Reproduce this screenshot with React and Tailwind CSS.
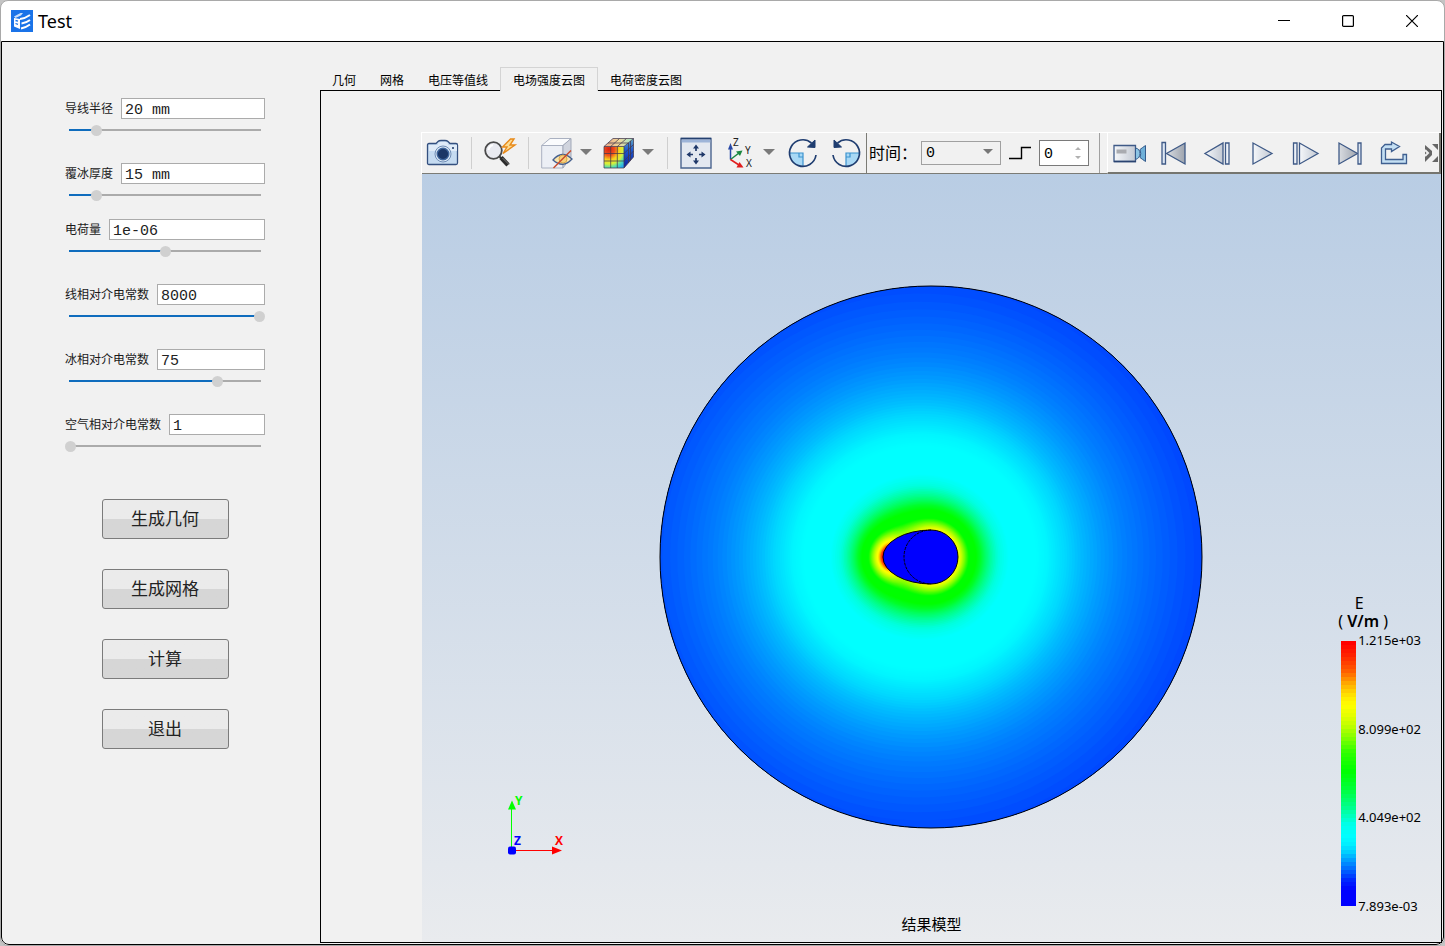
import React, { useState } from "react";

const STOPS = [
  [0, [0, 0, 255]],
  [0.05, [0, 0, 255]],
  [0.09, [0, 36, 255]],
  [0.12, [0, 84, 255]],
  [0.165, [0, 152, 255]],
  [0.2, [0, 208, 255]],
  [0.235, [0, 244, 255]],
  [0.265, [0, 255, 255]],
  [0.31, [0, 255, 230]],
  [0.37, [0, 255, 144]],
  [0.44, [0, 255, 60]],
  [0.51, [0, 255, 0]],
  [0.58, [48, 255, 0]],
  [0.63, [122, 255, 0]],
  [0.68, [190, 255, 0]],
  [0.72, [228, 255, 0]],
  [0.76, [255, 255, 0]],
  [0.79, [255, 236, 0]],
  [0.84, [255, 176, 0]],
  [0.89, [255, 96, 0]],
  [0.95, [255, 36, 0]],
  [1, [255, 0, 0]],
];

const PLOT_STOPS = [
  [0, [0, 64, 255]],
  [0.088, [0, 70, 255]],
  [0.105, [0, 100, 255]],
  [0.125, [0, 132, 255]],
  [0.15, [0, 176, 255]],
  [0.175, [0, 218, 255]],
  [0.2, [0, 246, 255]],
  [0.22, [0, 255, 255]],
  [0.29, [0, 255, 255]],
  [0.33, [0, 255, 222]],
  [0.38, [0, 255, 140]],
  [0.44, [0, 255, 40]],
  [0.48, [0, 255, 0]],
  [0.56, [0, 255, 0]],
  ...STOPS.slice(13),
];

function colorAt(t, stops = STOPS) {
  for (let i = 1; i < stops.length; i++) {
    if (t <= stops[i][0]) {
      const [a, ca] = stops[i - 1];
      const [b, cb] = stops[i];
      const k = (t - a) / (b - a);
      const c = ca.map((v, j) => Math.round(v + (cb[j] - v) * k));
      return `rgb(${c.join(",")})`;
    }
  }
  return "rgb(255,0,0)";
}

// Field strength (share of the maximum) of two line charges inside the iced wire.
const CHARGES = [
  [272, 272, 21276],
  [236, 272, 9260],
];
function field(x, y) {
  let ex = 0;
  let ey = 0;
  for (const [cx, cy, q] of CHARGES) {
    const dx = x - cx;
    const dy = y - cy;
    const d = dx * dx + dy * dy;
    ex += (q * dx) / d;
    ey += (q * dy) / d;
  }
  return Math.hypot(ex, ey) / 1215;
}

function contour(level) {
  const pts = [];
  for (let i = 0; i < 96; i++) {
    const a = (i / 96) * Math.PI * 2;
    let lo = 22;
    let hi = 420;
    for (let n = 0; n < 18; n++) {
      const m = (lo + hi) / 2;
      if (field(256 + m * Math.cos(a), 272 + m * Math.sin(a)) > level) lo = m;
      else hi = m;
    }
    pts.push(`${(256 + lo * Math.cos(a)).toFixed(1)} ${(272 + lo * Math.sin(a)).toFixed(1)}`);
  }
  return `M${pts.join("L")}Z`;
}

const BANDS = [];
for (let t = 0.08; t < 1; t += t < 0.3 ? 0.003 : 0.008) BANDS.push({ d: contour(t), fill: colorAt(t, PLOT_STOPS) });

function FieldPlot() {
  return (
    <svg viewBox="0 0 544 544" className="w-[544px] h-[544px]" role="img" aria-label="电场强度云图">
      <clipPath id="air"><circle cx="272" cy="272" r="271" /></clipPath>
      <g clipPath="url(#air)">
        <rect width="544" height="544" fill={colorAt(0.08, PLOT_STOPS)} />
        {BANDS.map((b, i) => <path key={i} d={b.d} fill={b.fill} />)}
      </g>
      <circle cx="272" cy="272" r="271" fill="none" stroke="#000" />
      <path d="M272 245A27 27 0 0 1 272 299A48 27 0 0 1 272 245Z" fill="#00f" stroke="#000" />
      <path d="M272 245A27 27 0 0 0 272 299" fill="none" stroke="#000" strokeDasharray="3 1" />
    </svg>
  );
}

function Icon({ children, size = "w-8 h-8" }) {
  return <svg viewBox="0 0 32 32" className={`${size} shrink-0 overflow-visible`} fill="none" aria-hidden="true">{children}</svg>;
}

const CameraIcon = () => (
  <Icon>
    <path d="M2 6.500H9L11 4.500Q12 3.500 14 3.500H18Q20 3.500 21 4.500L23 6.500H29Q30.500 6.500 30.500 8V26Q30.500 27.500 29 27.500H2Q.5 27.500 .5 26V8Q.5 6.500 2 6.500Z" fill="#c5dbf1" stroke="#34507f" strokeWidth="1.300" />
    <path d="M2 8H30V14H2Z" fill="#dfebf8" />
    <path d="M11 6.500L13 5H19L21 6.500V9H11Z" fill="#dfebf8" />
    <circle cx="16" cy="17" r="8" fill="#dce9f7" stroke="#6f8db5" />
    <circle cx="16" cy="17" r="5.800" fill="#1b3766" stroke="#3f669c" strokeWidth="1.400" />
    <circle cx="26" cy="11" r="1" fill="#1b3766" />
  </Icon>
);
const SearchIcon = () => (
  <Icon>
    <path d="M15 19L18 22" stroke="#333" strokeWidth="2" />
    <path d="M17 20.500L24 28" stroke="#2c2c2c" strokeWidth="4.500" />
    <path d="M18.500 21L25 27.500" stroke="#777" />
    <circle cx="9.500" cy="13.500" r="8.300" fill="#e9eaf0" stroke="#4a4a4a" strokeWidth="1.800" />
    <path d="M4.500 13Q5 9 9 8" stroke="#fff" strokeWidth="2" />
    <path d="M26.500 2L18.500 10H23L19 16.500L31 8H26L30 2Z" fill="#fddc92" stroke="#e88a1a" strokeWidth="1.400" />
  </Icon>
);
const HiddenCubeIcon = () => (
  <Icon>
    <path d="M.7 8.500H22V31H.7Z" fill="#eceff5" stroke="#aab1c1" />
    <path d="M.7 8.500L9 1.500H30L22 8.500Z" fill="#fafbfd" stroke="#aab1c1" />
    <path d="M22 8.500L30 1.500V20L22 31Z" fill="#d0d4de" stroke="#a2a9b9" />
    <path d="M12 23Q21 12.500 31 22Q22 32 12 23Z" fill="#fbe4ab" stroke="#46608f" strokeWidth="1.300" />
    <circle cx="22" cy="22" r="4" fill="#f7d07a" stroke="#d9a64d" />
    <path d="M12.500 31L30 13.500" stroke="#c94a2a" strokeWidth="1.500" />
  </Icon>
);
const ColorCubeIcon = () => (
  <Icon>
    <defs>
      <radialGradient id="cf" cx=".25" cy=".12" r="1.050">
        <stop offset="0" stopColor="#d81f12" /><stop offset=".28" stopColor="#f0521c" /><stop offset=".48" stopColor="#f8d21c" />
        <stop offset=".66" stopColor="#d7f03a" /><stop offset=".82" stopColor="#52dfb0" /><stop offset="1" stopColor="#27a8f0" />
      </radialGradient>
      <linearGradient id="ct" x1="0" x2="1"><stop offset="0" stopColor="#e5a184" /><stop offset=".5" stopColor="#f0d79a" /><stop offset="1" stopColor="#9fe8ce" /></linearGradient>
      <linearGradient id="cs" x1="0" y1="0" x2="0" y2="1"><stop offset="0" stopColor="#62a9c4" /><stop offset=".4" stopColor="#1c58d2" /><stop offset="1" stopColor="#0c1e9c" /></linearGradient>
    </defs>
    <path d="M1 9.500H21V31H1Z" fill="url(#cf)" />
    <path d="M1 9.500L10 1.500H30.500L21 9.500Z" fill="url(#ct)" />
    <path d="M21 9.500L30.500 1.500V20L21 31Z" fill="url(#cs)" />
    <path d="M1 9.500H21V31H1ZM1 9.500L10 1.500H30.500L21 9.500M30.500 1.500V20L21 31M7.700 31V9.500L16.500 1.500M14.300 31V9.500L23.500 1.500M1 16.500H21L30.500 7.500M1 24H21L30.500 14M5 6H25.500V26M27.500 4V23.500" stroke="#43384e" strokeOpacity=".75" strokeWidth="1" />
  </Icon>
);
const FitIcon = () => (
  <Icon>
    <path d="M1 1.500H31V31H1Z" fill="#e3e8f0" stroke="#4a648e" strokeWidth="1.400" />
    <path d="M1.700 2.500H30.300V5.500H1.700Z" fill="#9db4d8" />
    <path d="M1 1.500H31" stroke="#24406f" strokeWidth="1.400" />
    <path d="M16 10V14M16 21V25M9 17.500H13M19 17.500H23" stroke="#1f3869" strokeWidth="1.700" />
    <path d="M16 7.500L19 11.500H13ZM16 27.500L13 23.500H19ZM6.500 17.500L10.500 14.500V20.500ZM25.500 17.500L21.500 20.500V14.500Z" fill="#1f3869" />
  </Icon>
);
const AxesIcon = () => (
  <Icon>
    <path d="M4.500 22.500V10" stroke="#2747a6" strokeWidth="1.500" /><path d="M4.500 6L7 12.500H2Z" fill="#2747a6" />
    <path d="M4.500 22.500L13 16" stroke="#1b8740" strokeWidth="1.500" /><path d="M16.500 13.500L14 19L10 14.500Z" fill="#1b8740" />
    <path d="M4.500 22.500L13 28" stroke="#e11d1d" strokeWidth="1.500" /><path d="M17.500 30.500L10.500 30.500L13.500 25Z" fill="#e11d1d" />
    <g fill="#222" fontFamily="Noto Sans, sans-serif" fontSize="10">
      <text x="7" y="9">Z</text><text x="19" y="17">Y</text><text x="20" y="30">X</text>
    </g>
  </Icon>
);
const RotateIcon = () => (
  <Icon>
    <path d="M1.500 16H15V29Q2.500 28 1.500 16Z" fill="#a8d8f5" />
    <path d="M1.500 16H15V29M11 16V20H15" stroke="#3b93cf" strokeWidth="1.200" />
    <path d="M28 18A13.300 13.300 0 1 1 23.500 6" stroke="#1f3d70" strokeWidth="1.700" />
    <path d="M27 3V10.500L19.500 10Z" fill="#1f3d70" stroke="#1f3d70" />
  </Icon>
);
const RotateBackIcon = () => (
  <Icon>
    <path d="M27.500 16H14V29Q26.500 28 27.500 16Z" fill="#a8d8f5" />
    <path d="M27.500 16H14V29M18 16V20H14" stroke="#3b93cf" strokeWidth="1.200" />
    <path d="M1 18A13.300 13.300 0 1 0 5.500 6" stroke="#1f3d70" strokeWidth="1.700" />
    <path d="M2 3V10.500L9.500 10Z" fill="#1f3d70" stroke="#1f3d70" />
  </Icon>
);

const BarStyle = { stroke: "#3f5a87", strokeWidth: 1.3 };
const Metal = () => (
  <defs>
    <linearGradient id="mt" x1="0" x2="1"><stop offset="0" stopColor="#f5f7fa" /><stop offset="1" stopColor="#c3c9d3" /></linearGradient>
    <linearGradient id="md" x1="0" x2="1"><stop offset="0" stopColor="#d9dce1" /><stop offset="1" stopColor="#9ea4ae" /></linearGradient>
  </defs>
);
const VideoIcon = () => (
  <Icon>
    <Metal />
    <path d="M0 8.500H21.500V24.500H0Z" fill="url(#mt)" {...BarStyle} />
    <path d="M2.500 12.500H12.500V16.500H2.500Z" fill="#a9abb0" />
    <path d="M21.500 11Q26 12 26 16.500Q26 21 21.500 22.500Z" fill="#8cc4e4" stroke="#345b8c" />
    <path d="M31.500 8.500V24.500Q28.500 22.500 26 20.500Q27.500 16.500 26 12.500Q28.500 10.500 31.500 8.500Z" fill="#6fb0d8" stroke="#345b8c" />
    <path d="M0 24.500H22" stroke="#2a4370" strokeWidth="1.600" />
  </Icon>
);
const FirstIcon = () => <Icon><path d="M4 5.500H7.500V27H4Z" fill="#dce6f2" {...BarStyle} /><path d="M27 6V27L8.500 16.500Z" fill="url(#md)" {...BarStyle} /></Icon>;
const PrevIcon = () => <Icon><path d="M21 6V27L3 16.500Z" fill="url(#mt)" {...BarStyle} /><path d="M23.500 6H27V27H23.500Z" fill="#eef2f8" {...BarStyle} /></Icon>;
const PlayIcon = () => <Icon><path d="M7 6V27L26 16.500Z" fill="url(#mt)" {...BarStyle} /></Icon>;
const NextIcon = () => <Icon><path d="M3.500 6H7V27H3.500Z" fill="#eef2f8" {...BarStyle} /><path d="M9.500 6V27L28 16.500Z" fill="url(#mt)" {...BarStyle} /></Icon>;
const LastIcon = () => <Icon><path d="M5 6V27L23.500 16.500Z" fill="url(#md)" {...BarStyle} /><path d="M24 6H27V27H24Z" fill="#dce6f2" {...BarStyle} /></Icon>;
const LoopIcon = () => (
  <Icon>
    <path d="M3.500 26.500V11L7 7.500H13.500V5L21.500 9.500L13.500 14.500V12H7.500V22.500H25V17.500H28.500V26.500Z" fill="#c4dff3" stroke="#3f5f90" strokeWidth="1.300" />
  </Icon>
);

const PLAYBACK = [
  ["录制", VideoIcon], ["第一帧", FirstIcon], ["上一帧", PrevIcon], ["播放", PlayIcon],
  ["下一帧", NextIcon], ["最后一帧", LastIcon], ["循环", LoopIcon],
];

function ToolButton({ label, children, className = "" }) {
  return <button type="button" aria-label={label} className={`flex items-center justify-center w-8 h-8 shrink-0 ${className}`}>{children}</button>;
}
function DropButton({ label, className = "ml-1.5" }) {
  return (
    <button type="button" aria-label={label} className={`flex items-center justify-center w-[14px] h-8 shrink-0 ${className}`}>
      <svg viewBox="0 0 12 6" className="w-3 h-1.5 mb-0.5"><path d="M0 0H12L6 6Z" fill="#7a7a7a" /></svg>
    </button>
  );
}
const Sep = () => <span className="w-px h-8 mx-3 shrink-0 bg-[#cfcfcf]" />;

const MONO = "font-['Liberation_Mono','Noto_Sans_CJK_SC',monospace]";

function Toolbar() {
  return (
    <div role="toolbar" aria-label="视图工具" className="flex h-[42px] overflow-hidden border-t border-l border-t-white border-l-white">
      <div className="flex items-center shrink-0 pl-[5px] pr-0.5 border-r border-b border-[#7b7b75]">
        <ToolButton label="截图"><CameraIcon /></ToolButton>
        <Sep />
        <ToolButton label="快速查询"><SearchIcon /></ToolButton>
        <Sep />
        <ToolButton label="隐藏"><HiddenCubeIcon /></ToolButton>
        <DropButton label="隐藏选项" />
        <ToolButton label="云图显示" className="ml-2.5"><ColorCubeIcon /></ToolButton>
        <DropButton label="显示选项" />
        <Sep />
        <ToolButton label="适应窗口"><FitIcon /></ToolButton>
        <ToolButton label="视角" className="ml-3.5"><AxesIcon /></ToolButton>
        <DropButton label="视角选项" className="ml-1" />
        <ToolButton label="顺时针旋转" className="ml-3"><RotateIcon /></ToolButton>
        <ToolButton label="逆时针旋转" className="ml-3"><RotateBackIcon /></ToolButton>
      </div>
      <div className="flex items-center shrink-0 pl-0.5 pr-[7px] border-b border-[#7b7b75]">
        <label htmlFor="time" className="text-[16px] leading-6 w-12 whitespace-nowrap">时间：</label>
        <div className="relative ml-1">
          <select id="time" defaultValue="0" className={`block w-20 h-6 pl-1 pt-0.5 appearance-none border border-[#a0a0a0] bg-[#f1f1f1] text-[15px] leading-5 ${MONO}`}>
            <option>0</option>
          </select>
          <svg viewBox="0 0 10 5" className="absolute right-2 top-2 w-2.5 h-[5px] pointer-events-none"><path d="M0 0H10L5 5Z" fill="#777" /></svg>
        </div>
        <svg viewBox="0 0 22 16" className="w-[22px] h-4 ml-2" aria-hidden="true"><path d="M0 13.500H12.500V2.500H22" fill="none" stroke="#000" strokeWidth="1.400" /></svg>
        <div className="relative ml-2">
          <input type="number" aria-label="步" defaultValue="0" className={`block w-[50px] h-[26px] pl-1 pt-0.5 border border-[#7a7a7a] bg-white text-[15px] leading-5 [appearance:textfield] [&::-webkit-inner-spin-button]:appearance-none ${MONO}`} />
          <svg viewBox="0 0 6 12" className="absolute right-2 top-[7px] w-1.5 h-3 pointer-events-none"><path d="M0 3H6L3 0ZM0 9H6L3 12Z" fill="#b0b0b0" /></svg>
        </div>
        <span className="w-px h-10 ml-2.5 bg-[#a0a0a0]" />
      </div>
      <div className="flex items-center flex-1 min-w-0 overflow-hidden border-l border-l-white border-b-2 border-b-[#75756f] border-r-2 border-r-[#75756f]">
        {PLAYBACK.map(([label, I]) => (
          <button key={label} type="button" aria-label={label} className="flex items-center justify-center w-11 h-8 shrink-0"><I /></button>
        ))}
        <button type="button" aria-label="更多" className="w-3.5 h-5 ml-auto shrink-0">
          <svg viewBox="0 0 14 20" className="w-3.5 h-5">
            <path d="M0 2L7 8V12L0 19Z" fill="#666" /><path d="M13 1H7L13 7ZM13 19H7L13 13Z" fill="#666" />
            <path d="M0 7L3 10L0 13" fill="none" stroke="#eee" strokeWidth="2" />
          </svg>
        </button>
      </div>
    </div>
  );
}

const PARAMS = [
  { id: "wire", label: "导线半径", value: "20 mm", pos: 14 },
  { id: "ice", label: "覆冰厚度", value: "15 mm", pos: 14 },
  { id: "charge", label: "电荷量", value: "1e-06", pos: 50 },
  { id: "epsw", label: "线相对介电常数", value: "8000", pos: 100 },
  { id: "epsi", label: "冰相对介电常数", value: "75", pos: 78 },
  { id: "epsa", label: "空气相对介电常数", value: "1", pos: 0 },
];

function Param({ id, label, value, pos }) {
  const [v, setV] = useState(pos);
  return (
    <div>
      <div className="flex items-center gap-2">
        <label htmlFor={id} className="text-[12px] leading-5 whitespace-nowrap text-[#1a1a1a]">{label}</label>
        <input id={id} defaultValue={value} className={`flex-1 min-w-0 h-[21px] px-[3px] pt-[3px] border border-[#ababab] bg-white text-[15px] leading-4 text-[#222] ${MONO}`} />
      </div>
      <input
        type="range"
        aria-label={label}
        value={v}
        onChange={(e) => setV(Number(e.target.value))}
        style={{ backgroundImage: `linear-gradient(to right,#0f6cbd ${v}%,#ababab ${v}%)` }}
        className="block w-full h-[22px] appearance-none bg-no-repeat bg-center bg-[length:calc(100%-8px)_2px] [&::-webkit-slider-thumb]:appearance-none [&::-webkit-slider-thumb]:w-[11px] [&::-webkit-slider-thumb]:h-[11px] [&::-webkit-slider-thumb]:rounded-full [&::-webkit-slider-thumb]:bg-[#d0d0d0]"
      />
    </div>
  );
}

const TABS = ["几何", "网格", "电压等值线", "电场强度云图", "电荷密度云图"];
const ACTIONS = ["生成几何", "生成网格", "计算", "退出"];
const TICKS = ["1.215e+03", "8.099e+02", "4.049e+02", "7.893e-03"];
const LEGEND = Array.from({ length: 66 }, (_, i) => colorAt(1 - i / 65));

export default function App() {
  const [tab, setTab] = useState(3);
  return (
    <div className="flex min-h-screen bg-[#c4c4c4] text-black font-['Noto_Sans','Noto_Sans_CJK_SC',sans-serif]">
      <div className="flex flex-col flex-1 min-w-0 overflow-hidden border border-[#a9a9a9] rounded-lg bg-white">
        <header className="flex items-center h-10 pl-2.5">
          <svg viewBox="0 0 22 22" className="w-[22px] h-[22px]" aria-hidden="true">
            <rect width="22" height="22" fill="#1a73e8" />
            <path d="M3 6.500L9.500 3H12L10 5.500L4.500 8Z" fill="#c9defa" />
            <path d="M3 8L9 9V19L3 16.500Z" fill="#fff" />
            <path d="M4.500 10.500L7 11.200M4.500 13.500L7 14.300" stroke="#1a73e8" strokeWidth="1.300" />
            <path d="M9 9Q14 8.500 19 5M10.500 13.500Q15 13 19 10M10 18.500Q15 17.500 19 14.500" stroke="#fff" strokeWidth="2" fill="none" />
          </svg>
          <h1 className="ml-[5px] text-[18px] leading-6">Test</h1>
          <div className="flex ml-auto">
            <button type="button" aria-label="最小化" className="flex items-center justify-center w-16 h-10"><svg viewBox="0 0 12 12" className="w-3 h-3"><path d="M0 5.500H12" stroke="#000" /></svg></button>
            <button type="button" aria-label="最大化" className="flex items-center justify-center w-16 h-10"><svg viewBox="0 0 12 12" className="w-3 h-3"><rect x=".6" y=".6" width="10.800" height="10.800" rx="1" fill="none" stroke="#000" strokeWidth="1.200" /></svg></button>
            <button type="button" aria-label="关闭" className="flex items-center justify-center w-16 h-10"><svg viewBox="0 0 12 12" className="w-3 h-3"><path d="M0 0L12 12M12 0L0 12" stroke="#000" strokeWidth="1.200" /></svg></button>
          </div>
        </header>

        <div className="flex flex-1 min-w-0 border border-black rounded-b-lg bg-[#f1f1f1] pr-px pb-px">
          <aside className="w-[318px] shrink-0 pt-14 pl-[63px] pr-[55px]">
            <div className="flex flex-col gap-[22px]">
              {PARAMS.slice(0, 2).map((p) => <Param key={p.id} {...p} />)}
            </div>
            <div className="flex flex-col gap-[22px] mt-[13px]">
              {PARAMS.slice(2).map((p) => <Param key={p.id} {...p} />)}
            </div>
            <div className="flex flex-col items-center gap-[30px] mt-[42px]">
              {ACTIONS.map((a) => (
                <button key={a} type="button" className="w-[127px] h-10 border border-[#7b7b7b] rounded-[3px] bg-linear-to-b from-[#ebebeb] from-50% to-[#d6d6d6] to-50% text-[17px] leading-6 text-[#222]">{a}</button>
              ))}
            </div>
          </aside>

          <main className="flex flex-col flex-1 min-w-0 pt-[25px]">
            <div role="tablist" className="flex h-6 relative z-10">
              {TABS.map((t, i) => (
                <button
                  key={t}
                  type="button"
                  role="tab"
                  aria-selected={i === tab}
                  onClick={() => setTab(i)}
                  className={`px-3 text-[12px] leading-5 whitespace-nowrap ${i === tab ? "pt-0.5 border border-b-0 border-[#d4d4d4] bg-[#f1f1f1]" : "pt-1"}`}
                >
                  {t}
                </button>
              ))}
            </div>
            <section className="flex flex-col flex-1 min-w-0 -mt-px border border-black pt-[41px] pl-[100px]">
              <Toolbar />
              <div className="relative flex flex-1 items-center justify-center min-h-[600px] ml-px pr-0.5 pb-0.5 bg-linear-to-b from-[#b9cde4] to-[#e9ebee]">
                <FieldPlot />
                <svg viewBox="0 0 70 70" className="absolute left-[83px] bottom-[84px] w-[70px] h-[70px]" aria-hidden="true">
                  <path d="M6.500 60.500V20" stroke="#00ff00" /><path d="M7 12.500L11 21.500H3Z" fill="#00ff00" />
                  <path d="M7 62.500H50" stroke="#ff0000" /><path d="M57 62.500L47 66.500V58.500Z" fill="#ff0000" />
                  <rect x="3" y="58.500" width="8" height="8" rx="2" fill="#0000ff" />
                  <g fontFamily="Open Sans, Noto Sans, sans-serif" fontWeight="700" fontSize="12">
                    <text x="10" y="17" fill="#00ff00">Y</text><text x="9" y="57" fill="#0000ff">Z</text><text x="50" y="57" fill="#ff0000">X</text>
                  </g>
                </svg>
                <p className="absolute bottom-1.5 inset-x-0 text-center text-[15px] leading-6">结果模型</p>
                <div className="absolute right-5 bottom-[29px] flex flex-col">
                  <div className="w-[54px] mb-[3px] text-center text-[16px] leading-[18px] whitespace-nowrap">
                    <div className="pr-2">E</div>
                    <div>( <span className="font-semibold">V/m</span> )</div>
                  </div>
                  <div className="flex h-[280px] items-center pl-[5px]">
                    <svg viewBox="0 0 15 66" preserveAspectRatio="none" shapeRendering="crispEdges" className="w-[15px] h-[265px]" aria-hidden="true">
                      {LEGEND.map((c, i) => <rect key={i} y={i} width="15" height="1.100" fill={c} />)}
                    </svg>
                    <ul className="flex flex-col justify-between h-full ml-0.5 text-[13px] leading-[14px]">
                      {TICKS.map((t) => <li key={t}>{t}</li>)}
                    </ul>
                  </div>
                </div>
              </div>
            </section>
          </main>
        </div>
      </div>
    </div>
  );
}
